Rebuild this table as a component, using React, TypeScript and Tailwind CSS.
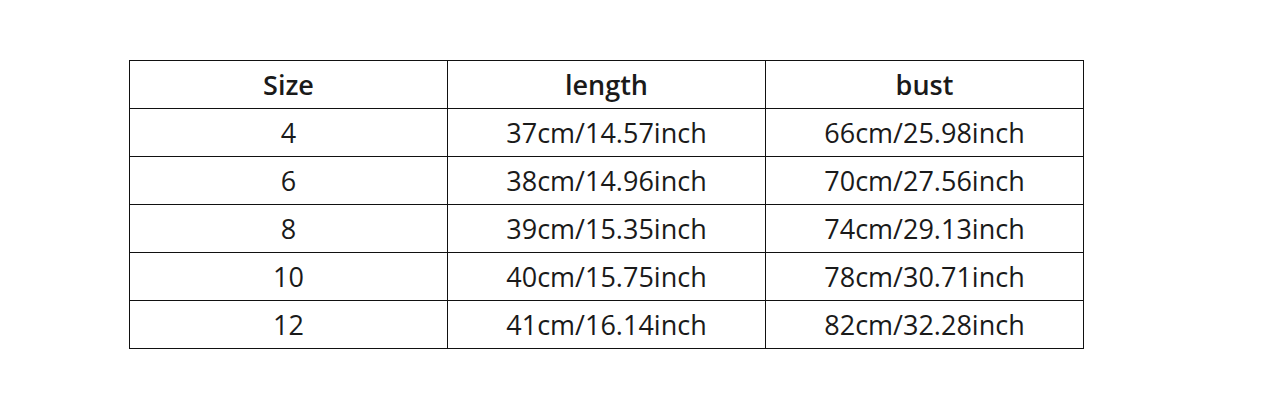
import { Fragment } from 'react'

type Row = {
  size: string
  length: string
  bust: string
}

const rows: Row[] = [
  { size: '4', length: '37cm/14.57inch', bust: '66cm/25.98inch' },
  { size: '6', length: '38cm/14.96inch', bust: '70cm/27.56inch' },
  { size: '8', length: '39cm/15.35inch', bust: '74cm/29.13inch' },
  { size: '10', length: '40cm/15.75inch', bust: '78cm/30.71inch' },
  { size: '12', length: '41cm/16.14inch', bust: '82cm/32.28inch' },
]

const cell = 'flex items-center justify-center h-[48px] border-r border-b border-[#111]'

export default function App() {
  return (
    <div
      className="w-[1266px] h-[413px] bg-white pl-[129px] pt-[60px] text-[#1a1a1a]"
      style={{ fontFamily: '"Open Sans", "Liberation Sans", sans-serif' }}
    >
      <div className="grid grid-cols-[repeat(3,318px)] w-[955px] border-l border-t border-[#111] text-[27px] leading-none">
        {/* header */}
        <div className={`${cell} font-semibold`}>Size</div>
        <div className={`${cell} font-semibold`}>length</div>
        <div className={`${cell} font-semibold`}>bust</div>

        {rows.map((r) => (
          <Fragment key={r.size}>
            <div className={cell}>{r.size}</div>
            <div className={cell}>{r.length}</div>
            <div className={cell}>{r.bust}</div>
          </Fragment>
        ))}
      </div>
    </div>
  )
}
